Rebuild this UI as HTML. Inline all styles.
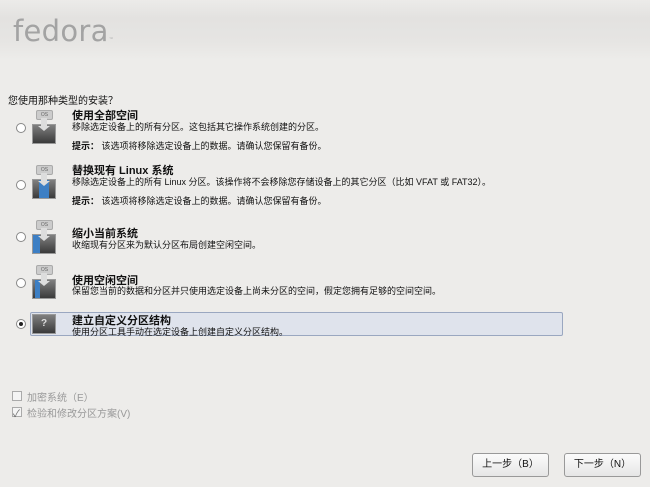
<!DOCTYPE html>
<html><head><meta charset="utf-8"><style>
*{margin:0;padding:0;box-sizing:border-box}
body{width:650px;height:487px;background:#edecea;position:relative;overflow:hidden;font-family:"Liberation Sans","Noto Sans CJK SC",sans-serif;color:#111}
.hdr{position:absolute;left:0;top:0;width:650px;height:60px;background:linear-gradient(#ecebe9,#e3e2e0 30%,#e6e5e3 70%,#edecea)}
.logo{position:absolute;left:13px;top:14px;font-size:29px;color:#a3a3a3;letter-spacing:0.3px;font-family:"DejaVu Sans","Liberation Sans",sans-serif}
.logo small{font-size:5px}
.a{position:absolute;white-space:nowrap}
.q{left:8px;top:92px;font-size:10px}
.t{font-size:11px;font-weight:bold;left:72px}
.d{font-size:9px;left:72px}
.radio{position:absolute;left:16px;width:10px;height:10px;border-radius:50%;border:1px solid #888;background:#fff}
.ico{position:absolute;left:32px;width:24px}
.tag{position:absolute;left:4px;top:0;width:17px;height:10px;background:#ccc;border:1px solid #aaa;border-radius:2px;font-size:5px;color:#666;text-align:center;line-height:8px}
.box{position:absolute;left:0;top:14px;width:24px;height:20px;background:linear-gradient(#808080,#3a3a3a);border:1px solid #999}
.arr{position:absolute;left:9px;top:8px;width:6px;height:10px;background:#ddd}
.arr:after{content:"";position:absolute;left:-3px;top:8px;border-left:6px solid transparent;border-right:6px solid transparent;border-top:5px solid #ddd}
.sel{position:absolute;left:30px;top:312px;width:533px;height:24px;background:#dfe3ec;border:1px solid #9aa7c0;border-radius:2px}
.btn{position:absolute;top:453px;height:24px;background:linear-gradient(#fbfbfb,#e6e6e6);border:1px solid #999;border-radius:3px;font-size:10px;text-align:center;line-height:22px}
.cb{position:absolute;left:12px;width:10px;height:10px;border:1px solid #aaa;background:#f4f4f4}
.g{color:#999;font-size:10px;left:27px}
</style></head><body>
<div class="hdr"></div>
<div class="logo">fedora<small>™</small></div>
<div class="a q">您使用那种类型的安装？</div>

<div class="radio" style="top:123px"></div>
<div class="ico" style="top:110px;height:36px"><div class="box"></div><div class="tag">OS</div><div class="arr"></div></div>
<div class="a t" style="top:107px">使用全部空间</div>
<div class="a d" style="top:120px">移除选定设备上的所有分区。这包括其它操作系统创建的分区。</div>
<div class="a d" style="top:139px"><b>提示：</b> 该选项将移除选定设备上的数据。请确认您保留有备份。</div>

<div class="radio" style="top:180px"></div>
<div class="ico" style="top:165px;height:36px"><div class="box"><div style="position:absolute;left:6px;top:0;width:10px;height:18px;background:#3d7fc4"></div></div><div class="tag">OS</div><div class="arr"></div></div>
<div class="a t" style="top:162px">替换现有 Linux 系统</div>
<div class="a d" style="top:175px">移除选定设备上的所有 Linux 分区。该操作将不会移除您存储设备上的其它分区（比如 VFAT 或 FAT32）。</div>
<div class="a d" style="top:194px"><b>提示：</b> 该选项将移除选定设备上的数据。请确认您保留有备份。</div>

<div class="radio" style="top:232px"></div>
<div class="ico" style="top:220px;height:36px"><div class="box"><div style="position:absolute;left:0;top:0;width:7px;height:18px;background:#3d7fc4"></div></div><div class="tag">OS</div><div class="arr"></div></div>
<div class="a t" style="top:225px">缩小当前系统</div>
<div class="a d" style="top:238px">收缩现有分区来为默认分区布局创建空闲空间。</div>

<div class="radio" style="top:278px"></div>
<div class="ico" style="top:265px;height:36px"><div class="box"><div style="position:absolute;left:2px;top:0;width:5px;height:18px;background:#3d7fc4"></div></div><div class="tag">OS</div><div class="arr"></div></div>
<div class="a t" style="top:272px">使用空闲空间</div>
<div class="a d" style="top:284px">保留您当前的数据和分区并只使用选定设备上尚未分区的空间，假定您拥有足够的空间空间。</div>

<div class="sel"></div>
<div class="radio" style="top:319px"><div style="position:absolute;left:2px;top:2px;width:4px;height:4px;border-radius:50%;background:#222"></div></div>
<div class="ico" style="top:314px;height:20px"><div class="box" style="top:0;height:20px;color:#ddd;font-size:10px;text-align:center;line-height:18px;font-weight:bold">?</div></div>
<div class="a t" style="top:312px">建立自定义分区结构</div>
<div class="a d" style="top:325px">使用分区工具手动在选定设备上创建自定义分区结构。</div>

<div class="cb" style="top:391px"></div>
<div class="a g" style="top:389px">加密系统（E）</div>
<div class="cb" style="top:407px"><span style="position:absolute;left:0;top:-3px;font-size:10px;color:#666">✓</span></div>
<div class="a g" style="top:405px">检验和修改分区方案(V)</div>

<div class="btn" style="left:472px;width:77px">上一步（B）</div>
<div class="btn" style="left:564px;width:77px">下一步（N）</div>
</body></html>
